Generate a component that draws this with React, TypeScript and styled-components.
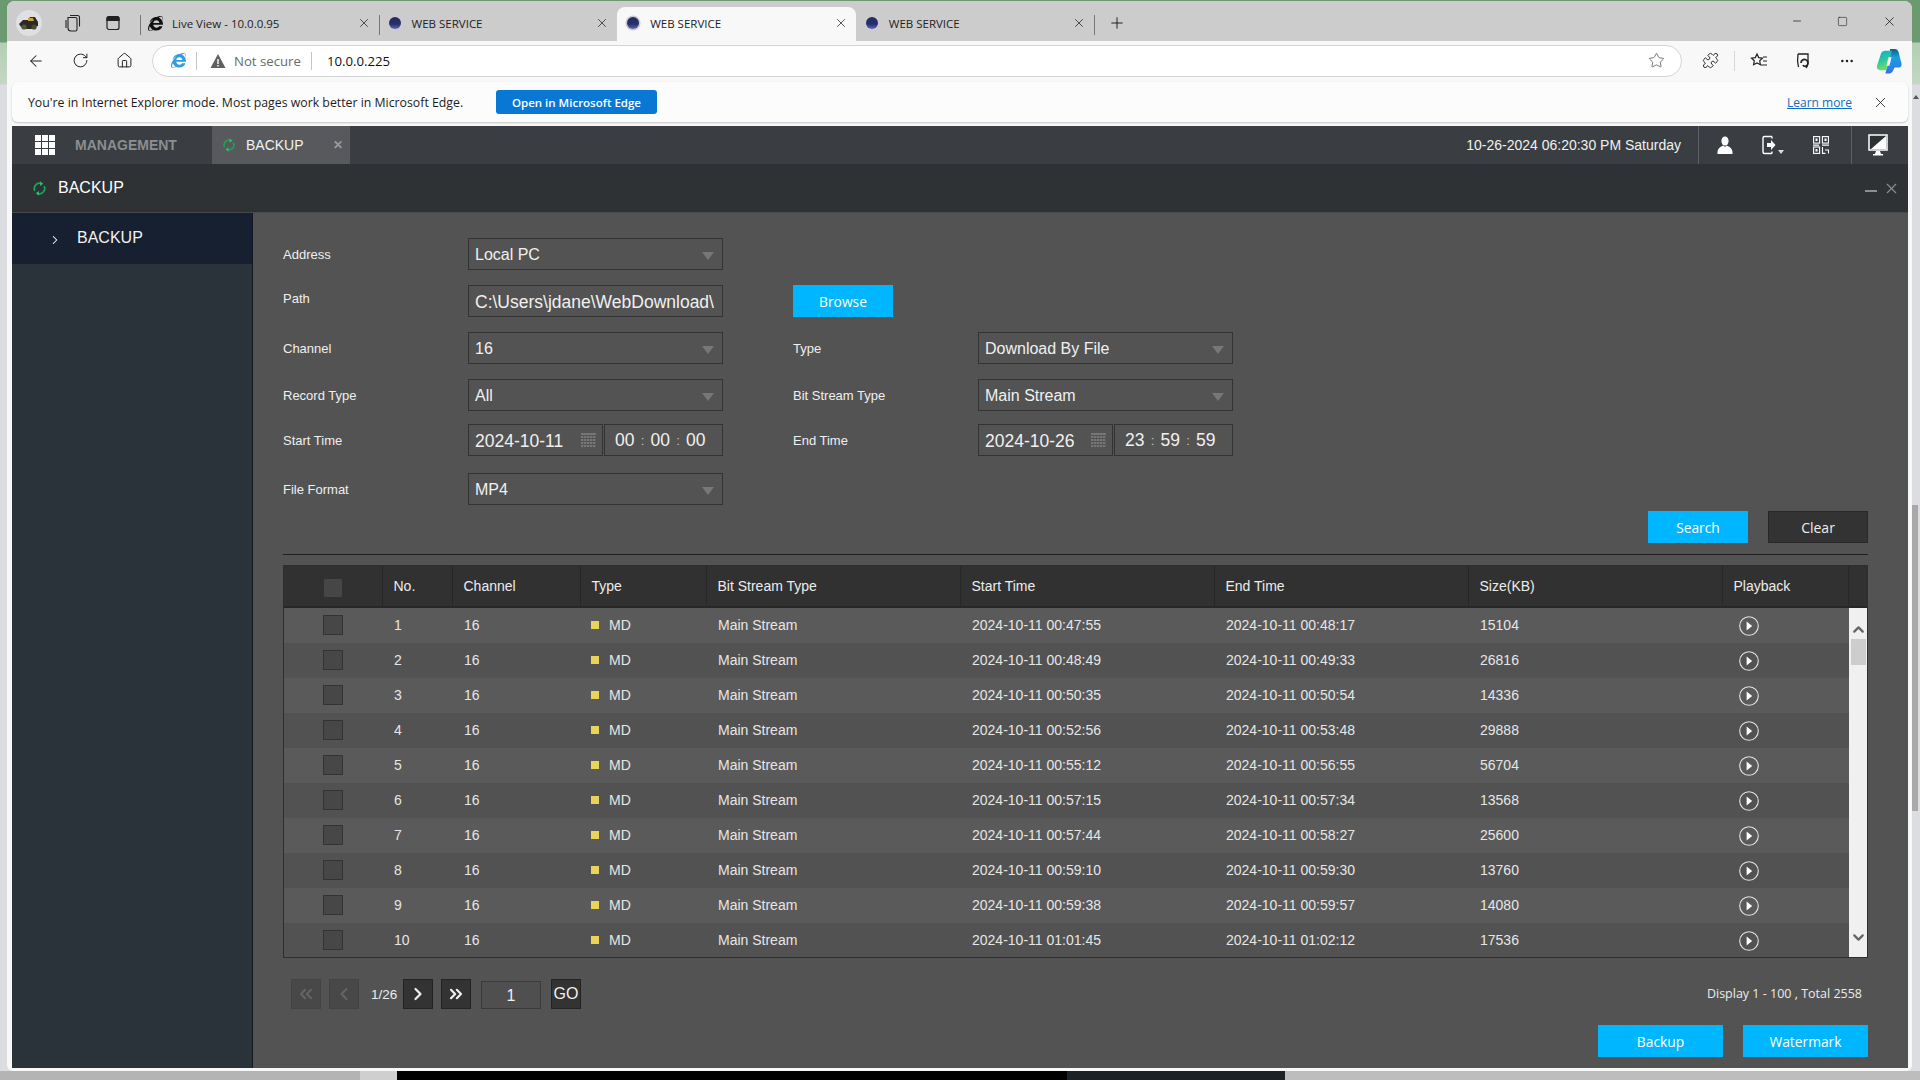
import React from "react";
import styled, { createGlobalStyle } from "styled-components";
import {
  ArrowLeft,
  ChevronDown,
  ChevronLeft,
  ChevronRight,
  ChevronUp,
  ChevronsLeft,
  ChevronsRight,
  Ellipsis,
  House,
  Minus,
  Plus,
  Puzzle,
  RotateCw,
  Square,
  Star,
  X,
} from "lucide-react";
import { FaInternetExplorer } from "react-icons/fa";

const rows = [
  { no: 1, start: "00:47:55", end: "00:48:17", size: 15104 },
  { no: 2, start: "00:48:49", end: "00:49:33", size: 26816 },
  { no: 3, start: "00:50:35", end: "00:50:54", size: 14336 },
  { no: 4, start: "00:52:56", end: "00:53:48", size: 29888 },
  { no: 5, start: "00:55:12", end: "00:56:55", size: 56704 },
  { no: 6, start: "00:57:15", end: "00:57:34", size: 13568 },
  { no: 7, start: "00:57:44", end: "00:58:27", size: 25600 },
  { no: 8, start: "00:59:10", end: "00:59:30", size: 13760 },
  { no: 9, start: "00:59:38", end: "00:59:57", size: 14080 },
  { no: 10, start: "01:01:45", end: "01:02:12", size: 17536 },
];

const columns = ["No.", "Channel", "Type", "Bit Stream Type", "Start Time", "End Time", "Size(KB)", "Playback"];

const Spinner = ({ size = 16 }: { size?: number }) => (
  <svg width={size} height={size} viewBox="0 0 16 16" fill="none">
    <path d="M3 10.5A5.6 5.6 0 0 1 9.5 2.6" stroke="#1aa556" strokeWidth="1.8" />
    <path d="M13 5.5A5.6 5.6 0 0 1 6.5 13.4" stroke="#1aa556" strokeWidth="1.8" />
    <path d="M8.6 0.2 12 3 8.6 5.4Z" fill="#22c468" />
    <path d="M7.4 15.8 4 13 7.4 10.6Z" fill="#22c468" />
  </svg>
);

const Globe = () => (
  <svg width="16" height="16" viewBox="0 0 16 16">
    <defs>
      <linearGradient id="gl" x1="0" y1="0" x2="0" y2="1">
        <stop offset="0" stopColor="#2a2a55" />
        <stop offset="0.6" stopColor="#27316f" />
        <stop offset="1" stopColor="#5a6bb0" />
      </linearGradient>
    </defs>
    <circle cx="8" cy="8" r="7.6" fill="#cfc9d6" />
    <circle cx="8" cy="8" r="6" fill="url(#gl)" />
  </svg>
);

const Avatar = () => (
  <svg width="26" height="26" viewBox="0 0 26 26">
    <circle cx="13" cy="13" r="13" fill="#dfe0e4" />
    <path d="M3 14l4-4h5l2-3h5l3 5v4l-3 1-2 2H8l-3-2z" fill="#2c2a22" />
    <circle cx="8" cy="17" r="2.6" fill="#4f5a3a" />
    <circle cx="18" cy="17" r="2.6" fill="#4a4a3a" />
    <path d="M12 8h5l1 3h-6z" fill="#c8a53a" />
  </svg>
);

const Workspaces = () => (
  <svg width="18" height="18" viewBox="0 0 18 18" fill="none" stroke="#222" strokeWidth="1.1">
    <path d="M6 1.5h7.5a2 2 0 0 1 2 2v9" />
    <path d="M4 3.5h7.5a1.5 1.5 0 0 1 1.5 1.5v10.5a1.5 1.5 0 0 1-1.5 1.5H7a3 3 0 0 1-3-3z" />
    <path d="M2 6v8" />
  </svg>
);

const TabsPane = () => (
  <svg width="16" height="16" viewBox="0 0 16 16" fill="none" stroke="#222" strokeWidth="1.2">
    <rect x="2" y="1.5" width="12" height="13" rx="2" />
    <path d="M2 5.5h12V3.5a2 2 0 0 0-2-2H4a2 2 0 0 0-2 2z" fill="#222" />
  </svg>
);

const FavList = () => (
  <svg width="18" height="18" viewBox="0 0 18 18" fill="none" stroke="#222" strokeWidth="1.2">
    <path d="M7 2l1.7 3.6 3.8.5-2.8 2.7.7 3.9L7 11l-3.4 1.7.7-3.9L1.500 6.100l3.800-.5z" />
    <path d="M13 5h4M13 9h4M11 13h6" />
  </svg>
);

const Essentials = () => (
  <svg width="18" height="18" viewBox="0 0 18 18" fill="none" stroke="#222" strokeWidth="1.3">
    <path d="M4 2h10v8c0 3-1 5-2 6" />
    <path d="M4 2c-.6 4-.6 9 .5 13" />
    <path d="M7 11a3.500 3.500 0 1 1 6 2.400c-1.500 1.400-3.500 1-4-.4" strokeWidth="1.700" />
  </svg>
);

const Copilot = () => (
  <svg width="26" height="28" viewBox="0 0 28 28">
    <defs>
      <linearGradient id="cl" x1="0" y1="0" x2="0.3" y2="1">
        <stop offset="0" stopColor="#17a8d0" />
        <stop offset="0.55" stopColor="#2fc7a0" />
        <stop offset="1" stopColor="#6fdc6a" />
      </linearGradient>
      <linearGradient id="cr" x1="0" y1="0" x2="0" y2="1">
        <stop offset="0" stopColor="#0f5f86" />
        <stop offset="0.35" stopColor="#1a9fe0" />
        <stop offset="1" stopColor="#3a6ee8" />
      </linearGradient>
    </defs>
    <path d="M15 1h5c2.500 0 4 1.500 4.500 4l3 12c.5 2.500-1 4-3 4H20l-2 4c-1 1.500-2.500 2.500-4.500 2.500H10L15 8z" fill="url(#cr)" />
    <path d="M10 3h7l-5 19c-.5 1.500-1.500 2-3 2H5c-3 0-4.500-2-4-4.500L5 7c.5-2.500 2.500-4 5-4z" fill="url(#cl)" />
    <path d="M13.600 10h3.200l-2.400 9h-3.200z" fill="#fff" />
  </svg>
);

const AppGrid = () => (
  <svg width="20" height="20" viewBox="0 0 20 20" fill="#fff">
    {[0, 7, 14].flatMap((y) =>
      [0, 7, 14].map((x) => <rect key={`${x}-${y}`} x={x} y={y} width="6" height="6" />)
    )}
  </svg>
);

const UserIcon = () => (
  <svg width="16" height="18" viewBox="0 0 16 18" fill="#fff">
    <ellipse cx="8" cy="5" rx="3.600" ry="4.600" />
    <path d="M6.500 9.500 8 11l1.500-1.500c3 1 5.500 2.500 6 6.500v2H.5v-2c.5-4 3-5.500 6-6.500z" />
  </svg>
);

const LogoutIcon = () => (
  <svg width="24" height="20" viewBox="0 0 24 20" fill="none">
    <path d="M11 1.500H3.500a1.500 1.500 0 0 0-1.500 1.500v14a1.500 1.500 0 0 0 1.500 1.500H11" stroke="#fff" strokeWidth="1.400" />
    <path d="M11 1.500v2M11 16.500v2" stroke="#fff" strokeWidth="1.400" />
    <path d="M6 8h4V5l4.500 5L10 15v-3H6z" fill="#fff" />
    <path d="M17 15h6l-3 4z" fill="#ddd" />
  </svg>
);

const QrIcon = () => (
  <svg width="16" height="18" viewBox="0 0 16 18" fill="none" stroke="#fff" strokeWidth="1.100">
    <rect x="0.600" y="0.600" width="6" height="6.500" />
    <rect x="9.400" y="0.600" width="6" height="6.500" />
    <rect x="0.600" y="11" width="6" height="6.400" />
    <rect x="2.500" y="2.500" width="2" height="2.500" fill="#fff" stroke="none" />
    <rect x="11.500" y="2.500" width="2" height="2.500" fill="#fff" stroke="none" />
    <rect x="2.500" y="13" width="2" height="2.500" fill="#fff" stroke="none" />
    <path d="M0 9.100h6M9 9.100h7M9.500 11v6.400h3M12 14h3.500v3.400" />
  </svg>
);

const MonitorIcon = () => (
  <svg width="20" height="22" viewBox="0 0 20 22">
    <rect x="1" y="1" width="18" height="15" fill="#2e3235" stroke="#fff" strokeWidth="1.500" />
    <path d="M18 2v13H3z" fill="#fff" />
    <path d="M8 17h4l1 3h2v1.500H5V20h2z" fill="#fff" />
  </svg>
);

const PlayIcon = () => (
  <svg width="20" height="20" viewBox="0 0 20 20">
    <circle cx="10" cy="10" r="9.300" fill="none" stroke="#e4e4e4" strokeWidth="1.100" />
    <path d="M7.600 5.600 13.200 10l-5.600 4.400z" fill="#fff" />
  </svg>
);

const CalendarIcon = () => (
  <svg width="15" height="14" viewBox="0 0 15 14" fill="#767676">
    <rect x="0" y="0" width="15" height="2" />
    {[3, 6, 9, 12].flatMap((y) =>
      [0, 3, 6, 9, 12].map((x) => <rect key={`${x}-${y}`} x={x} y={y} width="2.400" height="2" />)
    )}
  </svg>
);

const App: React.FC = () => {
  return (
    <Desktop>
      <GlobalStyle />
      <SideBarThumb />
      <SideArrow />
      <Browser>
        <TabStrip>
          <StripIcons>
            <Avatar />
            <Workspaces />
            <TabsPane />
          </StripIcons>
          <BrowserTab $divider>
            <FaInternetExplorer size={15} color="#111" />
            <TabTitle>Live View - 10.0.0.95</TabTitle>
            <TabClose><X size={14} strokeWidth={1.3} /></TabClose>
          </BrowserTab>
          <BrowserTab $divider>
            <Globe />
            <TabTitle>WEB SERVICE</TabTitle>
            <TabClose><X size={14} strokeWidth={1.3} /></TabClose>
          </BrowserTab>
          <BrowserTab $active>
            <Globe />
            <TabTitle>WEB SERVICE</TabTitle>
            <TabClose><X size={14} strokeWidth={1.3} /></TabClose>
          </BrowserTab>
          <BrowserTab>
            <Globe />
            <TabTitle>WEB SERVICE</TabTitle>
            <TabClose><X size={14} strokeWidth={1.3} /></TabClose>
          </BrowserTab>
          <NewTab><Plus size={18} strokeWidth={1.2} /></NewTab>
          <WindowButtons>
            <Minus size={12} strokeWidth={1.4} />
            <Square size={11} strokeWidth={1.2} />
            <X size={15} strokeWidth={1.2} />
          </WindowButtons>
        </TabStrip>

        <Toolbar>
          <NavButton><ArrowLeft size={18} strokeWidth={1.4} /></NavButton>
          <NavButton><RotateCw size={17} strokeWidth={1.4} /></NavButton>
          <NavButton><House size={17} strokeWidth={1.4} /></NavButton>
          <AddressBar>
            <FaInternetExplorer size={15} color="#2f9ee0" />
            <BarDivider />
            <WarnIcon viewBox="0 0 16 16">
              <path d="M8 1 15.500 15H.5z" fill="#5f5f5f" />
              <path d="M7.300 6h1.400v5H7.300zM7.300 12h1.400v1.500H7.300z" fill="#fff" />
            </WarnIcon>
            <NotSecure>Not secure</NotSecure>
            <BarDivider />
            <UrlText>10.0.0.225</UrlText>
            <BarStar><Star size={17} strokeWidth={1.1} color="#555" /></BarStar>
          </AddressBar>
          <ToolIcons>
            <ToolSlot><Puzzle size={17} strokeWidth={1.3} /></ToolSlot>
            <ToolDivider />
            <ToolSlot><FavList /></ToolSlot>
            <ToolSlot><Essentials /></ToolSlot>
            <ToolSlot><Ellipsis size={16} strokeWidth={1.8} /></ToolSlot>
            <CopilotSlot><Copilot /></CopilotSlot>
          </ToolIcons>
        </Toolbar>

        <ModeBanner>
          <BannerText>You're in Internet Explorer mode. Most pages work better in Microsoft Edge.</BannerText>
          <EdgeButton>Open in Microsoft Edge</EdgeButton>
          <LearnMore>Learn more</LearnMore>
          <BannerClose><X size={17} strokeWidth={1.2} /></BannerClose>
        </ModeBanner>

        <AppShell>
          <TopBar>
            <GridWrap><AppGrid /></GridWrap>
            <ManagementLabel>MANAGEMENT</ManagementLabel>
            <AppTab>
              <Spinner size={14} />
              <AppTabLabel>BACKUP</AppTabLabel>
              <AppTabClose>✕</AppTabClose>
            </AppTab>
            <Clock>10-26-2024 06:20:30 PM Saturday</Clock>
            <IconGroup>
              <IconCell><UserIcon /></IconCell>
              <IconCell><LogoutIcon /></IconCell>
              <IconCell><QrIcon /></IconCell>
            </IconGroup>
            <MonitorCell><MonitorIcon /></MonitorCell>
          </TopBar>

          <TitleBar>
            <Spinner size={15} />
            <TitleText>BACKUP</TitleText>
            <TitleActions>
              <TitleMinus />
              <X size={17} strokeWidth={1.5} />
            </TitleActions>
          </TitleBar>

          <Body>
            <SideNav>
              <NavItem>
                <ChevronRight size={14} strokeWidth={1.8} color="#fff" />
                <span>BACKUP</span>
              </NavItem>
            </SideNav>

            <Content>
              <FormRow>
                <FieldLabel>Address</FieldLabel>
                <SelectBox><span>Local PC</span><Caret /></SelectBox>
              </FormRow>
              <FormRow $top={15}>
                <FieldLabel $up>Path</FieldLabel>
                <PathInput readOnly value="C:\Users\jdane\WebDownload\" />
                <Gap />
                <BlueButton $w={100}>Browse</BlueButton>
              </FormRow>
              <FormRow $top={15}>
                <FieldLabel>Channel</FieldLabel>
                <SelectBox><span>16</span><Caret /></SelectBox>
                <Gap />
                <FieldLabel>Type</FieldLabel>
                <SelectBox><span>Download By File</span><Caret /></SelectBox>
              </FormRow>
              <FormRow $top={15}>
                <FieldLabel>Record Type</FieldLabel>
                <SelectBox><span>All</span><Caret /></SelectBox>
                <Gap />
                <FieldLabel>Bit Stream Type</FieldLabel>
                <SelectBox><span>Main Stream</span><Caret /></SelectBox>
              </FormRow>
              <FormRow $top={13}>
                <FieldLabel>Start Time</FieldLabel>
                <DateTime>
                  <DateBox><span>2024-10-11</span><CalendarIcon /></DateBox>
                  <TimeBox>00<i>:</i>00<i>:</i>00</TimeBox>
                </DateTime>
                <Gap />
                <FieldLabel>End Time</FieldLabel>
                <DateTime>
                  <DateBox><span>2024-10-26</span><CalendarIcon /></DateBox>
                  <TimeBox>23<i>:</i>59<i>:</i>59</TimeBox>
                </DateTime>
              </FormRow>
              <FormRow $top={17}>
                <FieldLabel>File Format</FieldLabel>
                <SelectBox><span>MP4</span><Caret /></SelectBox>
              </FormRow>

              <SearchRow>
                <BlueButton $w={100}>Search</BlueButton>
                <DarkButton>Clear</DarkButton>
              </SearchRow>
              <Rule />

              <RecordTable>
                <HeadRow>
                  <HeadCell $center><HeadCheck /></HeadCell>
                  {columns.map((c) => (
                    <HeadCell key={c}>{c}</HeadCell>
                  ))}
                  <HeadEnd />
                </HeadRow>
                <TableBody>
                  <RowList>
                    {rows.map((r) => (
                      <DataRow key={r.no} $odd={r.no % 2 === 1}>
                        <Cell $center><RowCheck /></Cell>
                        <Cell>{r.no}</Cell>
                        <Cell>16</Cell>
                        <Cell><TypeDot />MD</Cell>
                        <Cell>Main Stream</Cell>
                        <Cell>2024-10-11 {r.start}</Cell>
                        <Cell>2024-10-11 {r.end}</Cell>
                        <Cell>{r.size}</Cell>
                        <PlayCell><PlayIcon /></PlayCell>
                      </DataRow>
                    ))}
                  </RowList>
                  <ScrollTrack>
                    <ChevronUp size={17} strokeWidth={3.2} color="#666" />
                    <ScrollThumb />
                    <ScrollDown><ChevronDown size={17} strokeWidth={3.2} color="#666" /></ScrollDown>
                  </ScrollTrack>
                </TableBody>
              </RecordTable>

              <Pager>
                <PageButton disabled><ChevronsLeft size={20} strokeWidth={2.6} /></PageButton>
                <PageButton disabled $left={8}><ChevronLeft size={20} strokeWidth={2.6} /></PageButton>
                <PageCount>1/26</PageCount>
                <PageButton><ChevronRight size={20} strokeWidth={2.6} /></PageButton>
                <PageButton $left={8}><ChevronsRight size={20} strokeWidth={2.6} /></PageButton>
                <PageInput>1</PageInput>
                <PageButton $left={10}>GO</PageButton>
                <DisplayCount>Display 1 - 100 , Total 2558</DisplayCount>
              </Pager>

              <ActionRow>
                <BlueButton $w={125}>Backup</BlueButton>
                <BlueButton $w={125}>Watermark</BlueButton>
              </ActionRow>
            </Content>
          </Body>
        </AppShell>
      </Browser>
      <BackStrip>
        <BackPiece $w={360} $bg="#b4b4b4" />
        <BackPiece $w={37} $bg="#cfcfcf" />
        <BackPiece $w={670} $bg="#000" />
        <BackPiece $w={218} $bg="#1c2125" />
        <BackPiece $w={635} $bg="#bdbdbd" />
      </BackStrip>
    </Desktop>
  );
};

export default App;

const GlobalStyle = createGlobalStyle`
  html, body {
    margin: 0;
    padding: 0;
    background: #d9d9db;
  }
  * {
    box-sizing: border-box;
  }
`;

const Desktop = styled.div`
  position: relative;
  width: 1920px;
  height: 1080px;
  overflow: hidden;
  padding-top: 1px;
  font-family: "Liberation Sans", Arial, sans-serif;
  background: linear-gradient(
    to bottom,
    #6c9a70 0,
    #6c9a70 42px,
    #b4cdb4 43px,
    #c4d8c4 84px,
    #dcdde0 85px,
    #dcdde0 100%
  );
`;

const SideBarThumb = styled.div`
  position: absolute;
  left: 1912px;
  top: 505px;
  width: 6px;
  height: 306px;
  background: #a9a9a9;
`;

const SideArrow = styled.div`
  position: absolute;
  left: 1913px;
  top: 95px;
  border-left: 3px solid transparent;
  border-right: 3px solid transparent;
  border-bottom: 4px solid #555;
`;

const Browser = styled.div`
  width: 1905px;
  height: 1070px;
  margin-left: 7px;
  background: #f8f8f8;
  border-radius: 8px 8px 6px 6px;
  overflow: hidden;
  display: flex;
  flex-direction: column;
`;

const TabStrip = styled.div`
  height: 40px;
  flex: none;
  display: flex;
  align-items: flex-end;
  background: #cccccc;
  font-family: "Open Sans", sans-serif;
  font-size: 11.5px;
  color: #222;
`;

const StripIcons = styled.div`
  width: 133px;
  height: 34px;
  padding: 0 0 2px 9px;
  display: flex;
  align-items: center;
  gap: 22px;

  svg:nth-child(3) {
    margin-left: 1px;
  }
`;

const BrowserTab = styled.div<{ $active?: boolean; $divider?: boolean }>`
  width: 238.6px;
  height: 34px;
  padding: 0 6px 2px 8px;
  display: flex;
  align-items: center;
  gap: 9px;
  position: relative;
  background: ${(p) => (p.$active ? "#f8f8f8" : "transparent")};
  border-radius: 8px 8px 0 0;

  &::before {
    content: "";
    display: ${(p) => (p.$divider ? "block" : "none")};
    position: absolute;
    left: 0;
    top: 8px;
    width: 1px;
    height: 20px;
    background: #777;
  }
`;

const TabTitle = styled.span`
  white-space: nowrap;
`;

const TabClose = styled.span`
  margin-left: auto;
  display: flex;
  margin-right: 2px;
`;

const NewTab = styled.div`
  height: 34px;
  width: 46px;
  padding-bottom: 2px;
  display: flex;
  align-items: center;
  justify-content: center;
  position: relative;
  color: #111;

  &::before {
    content: "";
    position: absolute;
    left: 0;
    top: 8px;
    width: 1px;
    height: 20px;
    background: #777;
  }
`;

const WindowButtons = styled.div`
  margin-left: auto;
  height: 40px;
  padding: 0 15px 0 0;
  display: flex;
  align-items: center;
  gap: 34px;
  color: #111;
`;

const Toolbar = styled.div`
  height: 39px;
  flex: none;
  display: flex;
  align-items: center;
  padding: 0 0 0 7px;
`;

const NavButton = styled.div`
  width: 44px;
  display: flex;
  justify-content: center;
  color: #222;
`;

const AddressBar = styled.div`
  width: 1530px;
  height: 32px;
  margin-left: 6px;
  padding: 0 16px 0 18px;
  display: flex;
  align-items: center;
  background: #fff;
  border: 1px solid #d4d4d4;
  border-radius: 16px;
  font-family: "Open Sans", sans-serif;
  font-size: 13.2px;
`;

const BarDivider = styled.div`
  width: 1px;
  height: 18px;
  background: #c4c4c4;
  margin: 0 11px 0 10px;
`;

const WarnIcon = styled.svg`
  width: 16px;
  height: 16px;
  margin-left: 2px;
  margin-right: 8px;
`;

const NotSecure = styled.span`
  color: #6a6a6a;
`;

const UrlText = styled.span`
  color: #111;
  margin-left: 4px;
`;

const BarStar = styled.span`
  margin-left: auto;
  display: flex;
`;

const ToolIcons = styled.div`
  flex: 1;
  display: flex;
  align-items: center;
  padding-left: 6px;
  color: #222;
`;

const ToolSlot = styled.div`
  width: 44px;
  flex: none;
  display: flex;
  justify-content: center;
`;

const CopilotSlot = styled.div`
  width: 40px;
  flex: none;
  display: flex;
  justify-content: center;
`;

const ToolDivider = styled.div`
  width: 1px;
  height: 20px;
  flex: none;
  background: #d8d8d8;
  margin: 0 2px;
`;

const ModeBanner = styled.div`
  height: 40px;
  flex: none;
  margin: 2px 4px 4px 5px;
  padding: 0 19px 0 16px;
  display: flex;
  align-items: center;
  background: #fcfcfc;
  border-radius: 6px;
  box-shadow: 0 1px 2px rgba(0, 0, 0, 0.22);
  font-family: "Open Sans", sans-serif;
  color: #1c1c1c;
`;

const BannerText = styled.span`
  font-size: 12.3px;
  width: 468px;
  white-space: nowrap;
`;

const EdgeButton = styled.div`
  width: 161px;
  height: 24px;
  display: flex;
  align-items: center;
  justify-content: center;
  background: #0878d4;
  border-radius: 3px;
  color: #fff;
  font-size: 11.5px;
  font-weight: 600;
`;

const LearnMore = styled.a`
  margin-left: auto;
  font-size: 12px;
  color: #0f6cbd;
  text-decoration: underline;
`;

const BannerClose = styled.span`
  display: flex;
  margin-left: 20px;
  color: #222;
`;

const AppShell = styled.div`
  flex: 1;
  margin: 0 4px 3px 5px;
  min-height: 0;
  display: flex;
  flex-direction: column;
`;

const TopBar = styled.div`
  height: 38px;
  flex: none;
  display: flex;
  align-items: center;
  background: #3a3e42;
  color: #fff;
`;

const GridWrap = styled.div`
  display: flex;
  margin-left: 23px;
`;

const ManagementLabel = styled.span`
  margin-left: 20px;
  width: 137px;
  font-size: 14px;
  font-weight: bold;
  color: #8c8e90;
`;

const AppTab = styled.div`
  width: 138px;
  height: 38px;
  padding-left: 10px;
  display: flex;
  align-items: center;
  background: #58595d;
`;

const AppTabLabel = styled.span`
  margin-left: 10px;
  font-size: 14px;
  color: #f2f2f2;
`;

const AppTabClose = styled.span`
  margin-left: auto;
  margin-right: 7px;
  font-size: 12px;
  font-weight: bold;
  color: #9b9b9b;
`;

const Clock = styled.span`
  margin-left: auto;
  margin-right: 17px;
  font-size: 14px;
  color: #f0f0f0;
`;

const IconGroup = styled.div`
  width: 154px;
  height: 38px;
  padding-left: 2px;
  display: flex;
  align-items: center;
  border-left: 1px solid #5d6165;
  border-right: 1px solid #5d6165;
`;

const IconCell = styled.div`
  width: 48px;
  display: flex;
  justify-content: center;
`;

const MonitorCell = styled.div`
  width: 56px;
  padding-right: 4px;
  display: flex;
  justify-content: center;
`;

const TitleBar = styled.div`
  height: 49px;
  flex: none;
  padding: 0 8px 0 20px;
  display: flex;
  align-items: center;
  background: #2e3235;
  border-bottom: 1px solid #45494c;
  color: #fff;
`;

const TitleText = styled.span`
  margin-left: 11px;
  font-size: 16px;
`;

const TitleActions = styled.div`
  margin-left: auto;
  display: flex;
  align-items: center;
  gap: 6px;
  color: #8e8e8e;
`;

const TitleMinus = styled.span`
  width: 12px;
  height: 2px;
  margin-top: 5px;
  background: #8e8e8e;
`;

const Body = styled.div`
  flex: 1;
  min-height: 0;
  display: flex;
`;

const SideNav = styled.div`
  width: 241px;
  flex: none;
  background: #2b333a;
  border-right: 1px solid #111821;
`;

const NavItem = styled.div`
  height: 51px;
  padding: 0 0 2px 36px;
  display: flex;
  align-items: center;
  gap: 15px;
  background: #172031;
  color: #f2f2f2;
  font-size: 16px;

  svg {
    margin-top: 5px;
  }
`;

const Content = styled.div`
  flex: 1;
  min-width: 0;
  padding: 25px 40px 0 30px;
  background: #535353;
  color: #eee;
`;

const FormRow = styled.div<{ $top?: number }>`
  display: flex;
  align-items: center;
  height: 32px;
  margin-top: ${(p) => p.$top ?? 0}px;
`;

const FieldLabel = styled.div<{ $up?: boolean }>`
  width: 185px;
  flex: none;
  font-size: 13px;
  color: #efefef;
  margin-top: ${(p) => (p.$up ? "-6px" : "0")};
`;

const Gap = styled.div`
  width: 70px;
  flex: none;
`;

const SelectBox = styled.div`
  width: 255px;
  height: 32px;
  flex: none;
  padding: 0 6px;
  display: flex;
  align-items: center;
  justify-content: space-between;
  border: 1px solid #333;
  font-size: 16px;
  color: #f0f0f0;

  span:first-child {
    margin-top: 1px;
  }
`;

const Caret = styled.span`
  margin-right: 2px;
  margin-top: 3px;
  border-left: 6px solid transparent;
  border-right: 6px solid transparent;
  border-top: 8px solid #777;
`;

const PathInput = styled.input`
  width: 255px;
  height: 32px;
  flex: none;
  padding: 2px 6px 0;
  background: transparent;
  border: 1px solid #333;
  outline: none;
  font-family: "Liberation Sans", Arial, sans-serif;
  font-size: 17.5px;
  color: #f0f0f0;
`;

const DateTime = styled.div`
  width: 255px;
  height: 32px;
  flex: none;
  display: flex;
  gap: 1px;
  font-size: 17.5px;
  color: #f0f0f0;
`;

const DateBox = styled.div`
  width: 135px;
  padding: 0 6px;
  display: flex;
  align-items: center;
  justify-content: space-between;
  border: 1px solid #333;

  span {
    margin-top: 2px;
  }
`;

const TimeBox = styled.div`
  flex: 1;
  padding-left: 10px;
  display: flex;
  align-items: center;
  border: 1px solid #333;

  i {
    font-style: normal;
    color: #c4c4c4;
    font-size: 13px;
    width: 16px;
    text-align: center;
  }
`;

const BlueButton = styled.div<{ $w: number }>`
  width: ${(p) => p.$w}px;
  height: 32px;
  flex: none;
  display: flex;
  align-items: center;
  justify-content: center;
  background: #00b7ff;
  color: #fff;
  font-family: "Open Sans", sans-serif;
  font-size: 13.8px;
`;

const DarkButton = styled.div`
  width: 100px;
  height: 32px;
  display: flex;
  align-items: center;
  justify-content: center;
  background: #333;
  border: 1px solid #282828;
  color: #efefef;
  font-family: "Open Sans", sans-serif;
  font-size: 14px;
`;

const SearchRow = styled.div`
  margin-top: 6px;
  display: flex;
  justify-content: flex-end;
  gap: 20px;
`;

const Rule = styled.div`
  height: 1px;
  margin-top: 11px;
  background: #1e1e1e;
`;

const RecordTable = styled.div`
  height: 393px;
  margin-top: 10px;
  overflow: hidden;
  border: 1px solid #2e2e2e;
`;

const HeadRow = styled.div`
  height: 42px;
  display: grid;
  grid-template-columns: 99px 70px 128px 126px repeat(4, 254px) 126px 1fr;
  background: #313131;
  border-bottom: 2px solid #272727;
`;

const HeadCell = styled.div<{ $center?: boolean }>`
  padding: 0 ${(p) => (p.$center ? "1px 0 0" : "10px 0 11px")};
  padding-left: ${(p) => (p.$center ? "0" : "10.5px")};
  display: flex;
  align-items: center;
  justify-content: ${(p) => (p.$center ? "center" : "flex-start")};
  border-right: 1px solid #272727;
  font-size: 14px;
  color: #ececec;
`;

const HeadEnd = styled.div``;

const HeadCheck = styled.span`
  width: 18px;
  height: 18px;
  margin-top: 3px;
  background: #464646;
`;

const TableBody = styled.div`
  display: flex;
`;

const RowList = styled.div`
  flex: none;
  width: 1565px;
`;

const DataRow = styled.div<{ $odd: boolean }>`
  height: 35px;
  padding-bottom: 2px;
  display: grid;
  grid-template-columns: 99px 70px 128px 126px repeat(4, 254px) 126px;
  background: ${(p) => (p.$odd ? "#5a5a5a" : "#525252")};
`;

const Cell = styled.div<{ $center?: boolean }>`
  padding: 0 ${(p) => (p.$center ? "1px 0 0" : "11px")};
  display: flex;
  align-items: center;
  justify-content: ${(p) => (p.$center ? "center" : "flex-start")};
  font-size: 14px;
  color: #e6e6e6;
`;

const PlayCell = styled.div`
  padding: 2px 0 0 16px;
  display: flex;
  align-items: center;
`;

const RowCheck = styled.span`
  width: 20px;
  height: 20px;
  background: #474747;
  border: 1px solid #333;
`;

const TypeDot = styled.span`
  width: 8px;
  height: 8px;
  margin-right: 10px;
  margin-left: -1px;
  background: #e8d35b;
`;

const ScrollTrack = styled.div`
  flex: 1;
  height: 350px;
  padding-top: 13px;
  display: flex;
  flex-direction: column;
  align-items: center;
  background: #f0f0f0;
`;

const ScrollThumb = styled.div`
  width: 15px;
  height: 26px;
  margin-top: 1px;
  background: #cdcdcd;
`;

const ScrollDown = styled.div`
  margin-top: auto;
  margin-bottom: 12px;
  display: flex;
`;

const Pager = styled.div`
  height: 30px;
  margin-top: 21px;
  padding-left: 8px;
  display: flex;
  align-items: center;
`;

const PageButton = styled.div<{ disabled?: boolean; $left?: number }>`
  width: 30px;
  height: 30px;
  flex: none;
  margin-left: ${(p) => p.$left ?? 0}px;
  display: flex;
  align-items: center;
  justify-content: center;
  background: ${(p) => (p.disabled ? "#484848" : "#333")};
  border: 1px solid ${(p) => (p.disabled ? "#434343" : "#232323")};
  color: ${(p) => (p.disabled ? "#646464" : "#f0f0f0")};
  font-size: 16px;
`;

const PageCount = styled.span`
  width: 44px;
  padding-left: 12px;
  font-size: 13.5px;
  color: #ececec;
  white-space: nowrap;
`;

const PageInput = styled.div`
  width: 60px;
  height: 28px;
  margin: 2px 0 0 10px;
  padding-top: 2px;
  display: flex;
  align-items: center;
  justify-content: center;
  border: 1px solid #3a3a3a;
  background: #4f4f4f;
  font-size: 16px;
  color: #f0f0f0;
`;

const DisplayCount = styled.span`
  margin-left: auto;
  margin-right: 6px;
  font-family: "Open Sans", sans-serif;
  font-size: 12.5px;
  color: #ececec;
  margin-top: -2px;
`;

const ActionRow = styled.div`
  margin-top: 16px;
  display: flex;
  justify-content: flex-end;
  gap: 20px;
`;

const BackStrip = styled.div`
  height: 9px;
  display: flex;
`;

const BackPiece = styled.div<{ $w: number; $bg: string }>`
  width: ${(p) => p.$w}px;
  background: ${(p) => p.$bg};
`;
